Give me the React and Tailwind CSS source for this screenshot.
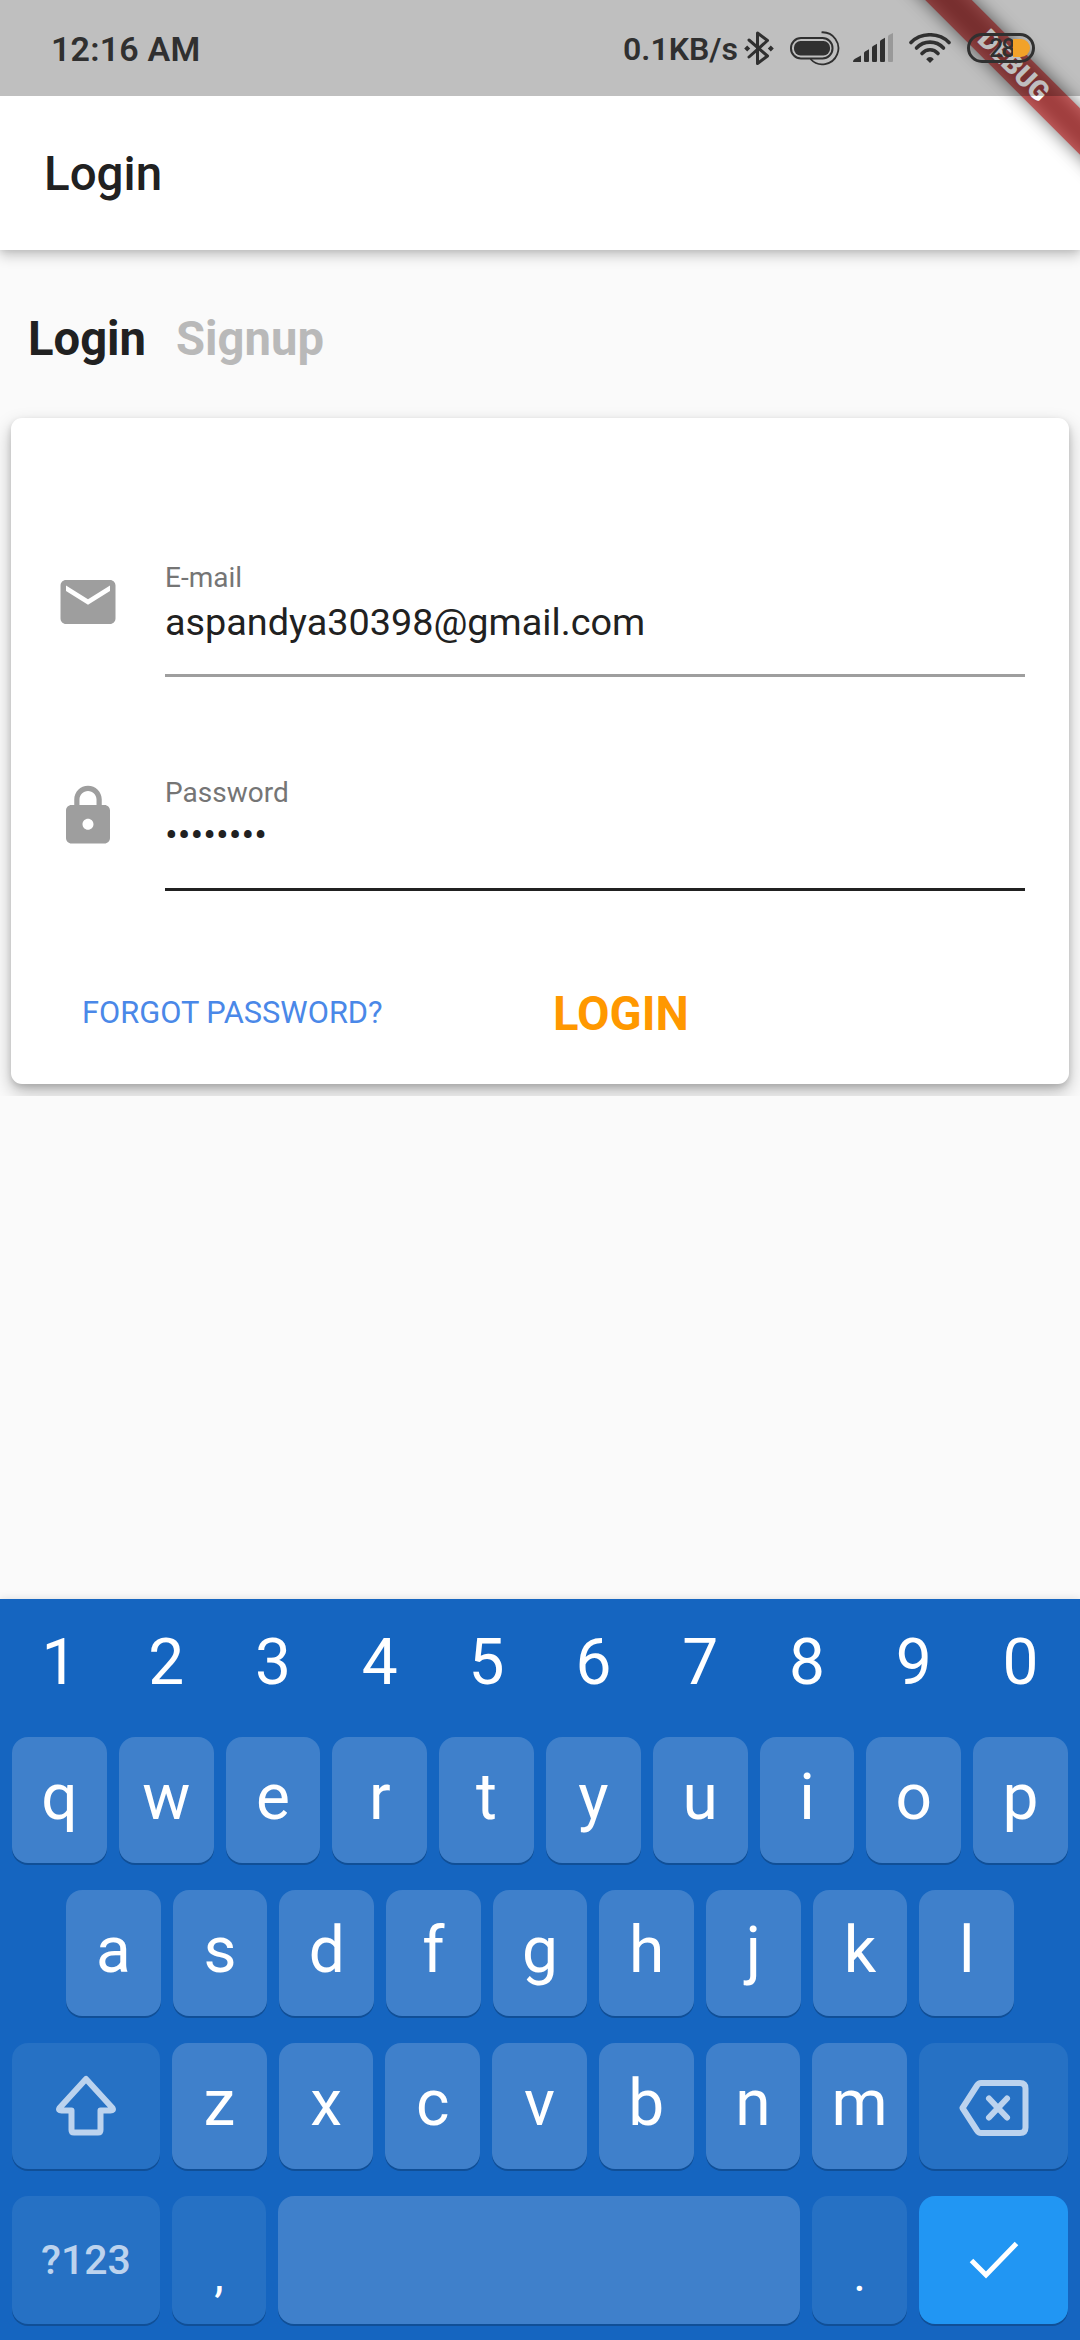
import React from "react";

const DIGITS = ["1", "2", "3", "4", "5", "6", "7", "8", "9", "0"];
const ROW_TOP = ["q", "w", "e", "r", "t", "y", "u", "i", "o", "p"];
const ROW_HOME = ["a", "s", "d", "f", "g", "h", "j", "k", "l"];
const ROW_BOTTOM = ["z", "x", "c", "v", "b", "n", "m"];

function BluetoothIcon() {
  return (
    <svg width="30" height="36" viewBox="0 0 30 36" fill="none" stroke="#303030" strokeWidth="3" strokeLinejoin="round" strokeLinecap="round">
      <path d="M5 10 L23.500 26 L13.500 33.500 V3 L23.500 10.500 L5 27" />
      <path d="M3.200 15.500 L6.200 18.500 L3.200 21.500 L.2 18.500Z M26.800 15.500 L29.800 18.500 L26.800 21.500 L23.800 18.500Z" fill="#303030" stroke="none" />
    </svg>
  );
}

function DeviceBatteryIcon() {
  return (
    <svg width="50" height="36" viewBox="0 0 50 36" fill="none" stroke="#303030">
      <rect x="1" y="8" width="41.500" height="20.500" rx="10" strokeWidth="2" />
      <rect x="4" y="11" width="36" height="14.500" rx="6.500" fill="#303030" stroke="none" />
      <path d="M31.500 2.300 A16 16 0 1 1 20.500 29" strokeWidth="1.800" />
    </svg>
  );
}

function SignalIcon() {
  return (
    <svg width="41" height="30" viewBox="0 0 41 30" fill="#303030">
      <path d="M0 28.500 Q0 27 2 25.800 L8 22.500 V29 H1 Q0 29 0 28.500Z" />
      <path d="M11 20 Q11 19 12 18.500 L16 16.300 V28 Q16 29 15 29 H12 Q11 29 11 28Z" />
      <path d="M19 14.500 Q19 13.500 20 13 L24 10.800 V28 Q24 29 23 29 H20 Q19 29 19 28Z" />
      <path d="M27 8.500 Q27 7.500 28 7 L32 4.800 V28 Q32 29 31 29 H28 Q27 29 27 28Z" />
      <path d="M35 3.500 Q35 2.500 36 2 L40 0 V28 Q40 29 39 29 H36 Q35 29 35 28Z" fill="#999999" />
    </svg>
  );
}

function WifiIcon() {
  return (
    <svg width="42" height="31" viewBox="0 0 42 31" fill="none" stroke="#303030" strokeWidth="3.600" strokeLinecap="round">
      <path d="M2 9.500 C12 -.8 30 -.8 40 9.500" />
      <path d="M7.500 15 C15 7.200 27 7.200 34.500 15" />
      <path d="M13 20.500 C17.500 15.500 24.500 15.500 29 20.500" />
      <path d="M21 30 L17.200 26.300 Q18.800 24 21 24 Q23.200 24 24.800 26.300Z" fill="#303030" stroke="none" />
    </svg>
  );
}

function StatusBar() {
  return (
    <div className="relative z-20 flex h-24 items-center bg-black/25 pl-[51px] text-[#303030]">
      <span className="w-[572px] pt-px text-[34px] leading-none font-semibold tracking-[0.2px]">12:16 AM</span>
      <span className="w-[121px] pt-px text-[32px] leading-none font-semibold whitespace-nowrap">0.1KB/s</span>
      <BluetoothIcon />
      <span className="ml-4"><DeviceBatteryIcon /></span>
      <span className="ml-[13px]"><SignalIcon /></span>
      <span className="ml-[15px]"><WifiIcon /></span>
      <span className="ml-[16px] flex h-[30px] w-[68px] items-center rounded-full border-[3px] border-[#303030] pl-[19px]">
        <span className="w-[24px] text-[25px] leading-none font-medium tracking-[-2px]">28</span>
        <span className="h-[18px] w-[17px] rounded-l-[3px] rounded-r-full bg-[#f2a229]" />
      </span>
    </div>
  );
}

function DebugRibbon() {
  return (
    <div className="pointer-events-none absolute top-0 right-0 z-10 h-[240px] w-[240px] overflow-hidden">
      <div className="absolute top-[49px] left-[14px] h-[33px] w-[320px] rotate-45 bg-black/55 blur-[9px]" />
      <div className="absolute top-[49px] left-[14px] flex h-[33px] w-[320px] rotate-45 items-center justify-center bg-[#b71c1c]/63 text-[27.500px] leading-none font-black text-white">
        DEBUG
      </div>
    </div>
  );
}

function MailIcon() {
  return (
    <svg width="66" height="66" viewBox="0 0 24 24" fill="#9e9e9e">
      <path d="M20 4H4c-1.100 0-1.990.9-1.990 2L2 18c0 1.100.9 2 2 2h16c1.100 0 2-.9 2-2V6c0-1.100-.9-2-2-2zm0 4l-8 5-8-5V6l8 5 8-5v2z" />
    </svg>
  );
}

function LockIcon() {
  return (
    <svg width="66" height="66" viewBox="0 0 24 24" fill="#9e9e9e">
      <path d="M18 8h-1V6c0-2.760-2.240-5-5-5S7 3.240 7 6v2H6c-1.100 0-2 .9-2 2v10c0 1.100.9 2 2 2h12c1.100 0 2-.9 2-2V10c0-1.100-.9-2-2-2zm-6 9c-1.100 0-2-.9-2-2s.9-2 2-2 2 .9 2 2-.9 2-2 2zm3.100-9H8.900V6c0-1.710 1.390-3.100 3.100-3.100 1.710 0 3.100 1.390 3.100 3.100v2z" />
    </svg>
  );
}

function LoginCard() {
  return (
    <div className="h-[690px] overflow-hidden px-[11px] pt-[12px]">
      <div className="h-[666px] rounded-[11px] bg-white pr-[44px] pl-[44px] pt-[141px] shadow-[0_8px_18px_rgba(0,0,0,0.26),0_3px_6px_rgba(0,0,0,0.14)]">
        <div className="flex h-[215px]">
          <div className="w-[110px] pt-[10px]"><MailIcon /></div>
          <div className="h-[118px] flex-1 border-b-[3px] border-[#9e9e9e]">
            <div className="pt-[3px] text-[28px] leading-[32px] text-[#757575]">E-mail</div>
            <div className="pt-[6px] text-[37.800px] leading-[44px] text-[#212121]">aspandya30398@gmail.com</div>
          </div>
        </div>
        <div className="flex h-[188px]">
          <div className="w-[110px] pt-[9px]"><LockIcon /></div>
          <div className="h-[117px] flex-1 border-b-[3px] border-[#212121]">
            <div className="pt-[3px] text-[28px] leading-[32px] text-[#757575]">Password</div>
            <div className="pt-[4px] text-[37.800px] leading-[44px] text-[#212121]">••••••••</div>
          </div>
        </div>
        <div className="mt-[9px] flex h-[84px] items-center pl-[27px]">
          <span className="w-[471px] text-[30.800px] leading-none text-[#4a88e8]">FORGOT PASSWORD?</span>
          <span className="pt-[3px] text-[47.200px] leading-none font-bold text-[#ff9800]">LOGIN</span>
        </div>
      </div>
    </div>
  );
}

function Key({ children }) {
  return (
    <div className="flex h-[126px] min-w-0 flex-1 items-center justify-center rounded-2xl bg-[#3f80cb] pb-[5px] text-[64px] leading-none text-white shadow-[0_2px_0_#104f97]">
      {children}
    </div>
  );
}

function ShiftIcon() {
  return (
    <svg width="66" height="66" viewBox="0 0 66 66" fill="none" stroke="#bcd3ee" strokeWidth="6" strokeLinejoin="round">
      <path d="M33 6 L6.500 35 Q5 37.500 8.500 37.500 H18.500 V57 Q18.500 59.500 21 59.500 H45 Q47.500 59.500 47.500 57 V37.500 H57.500 Q61 37.500 59.500 35 Z" />
    </svg>
  );
}

function BackspaceIcon() {
  return (
    <svg width="70" height="56" viewBox="0 0 70 56" fill="none" stroke="#bcd3ee" strokeWidth="6" strokeLinejoin="round" strokeLinecap="round">
      <path d="M22 3 H61 Q66.500 3 66.500 8.500 V47.500 Q66.500 53 61 53 H22 Q19.500 53 18 50.500 L3.500 28 L18 5.500 Q19.500 3 22 3Z" />
      <path d="M30 18.500 L48 37.500 M48 18.500 L30 37.500" />
    </svg>
  );
}

function Keyboard() {
  return (
    <div className="flex h-[741px] flex-col bg-[#1565c0] px-3 text-white shadow-[0_0_8px_rgba(0,0,0,0.12)]">
      <div className="flex h-[138px] gap-3 pt-[32px]">
        {DIGITS.map((d) => (
          <div key={d} className="flex-1 text-center text-[64px] leading-[64px]">{d}</div>
        ))}
      </div>
      <div className="flex gap-3">
        {ROW_TOP.map((k) => <Key key={k}>{k}</Key>)}
      </div>
      <div className="mt-[27px] flex gap-3 px-[54px]">
        {ROW_HOME.map((k) => <Key key={k}>{k}</Key>)}
      </div>
      <div className="mt-[27px] flex gap-3">
        <div className="flex h-[126px] w-[148px] items-center justify-center rounded-2xl bg-[#2671c4] shadow-[0_2px_0_#104f97]"><ShiftIcon /></div>
        {ROW_BOTTOM.map((k) => <Key key={k}>{k}</Key>)}
        <div className="flex h-[126px] w-[149px] items-center justify-center rounded-2xl bg-[#2671c4] pt-1 shadow-[0_2px_0_#104f97]"><BackspaceIcon /></div>
      </div>
      <div className="mt-[27px] flex h-[128px] gap-3">
        <div className="flex w-[148px] items-center justify-center rounded-2xl bg-[#2671c4] pt-px text-[41px] leading-none font-medium text-[#bcd3ee] shadow-[0_2px_0_#104f97]">?123</div>
        <div className="w-[94px] rounded-2xl bg-[#2671c4] pt-[47px] text-center text-[48px] leading-[64px] shadow-[0_2px_0_#104f97]">,</div>
        <div className="flex-1 rounded-2xl bg-[#3f80cb] shadow-[0_2px_0_#104f97]" />
        <div className="w-[95px] rounded-2xl bg-[#2671c4] pt-[47px] text-center text-[48px] leading-[64px] shadow-[0_2px_0_#104f97]">.</div>
        <div className="flex w-[149px] items-center justify-center rounded-2xl bg-[#2196f3] shadow-[0_2px_0_#104f97]">
          <svg width="50" height="40" viewBox="0 0 50 40" fill="none" stroke="#ffffff" strokeWidth="5">
            <path d="M2.500 20.500 L17 35 L47.500 3.500" />
          </svg>
        </div>
      </div>
    </div>
  );
}

export default function App() {
  return (
    <div className="relative flex h-[2340px] w-[1080px] flex-col overflow-hidden bg-[#fafafa] font-['Roboto',sans-serif]">
      <header className="bg-white shadow-[0_6px_12px_rgba(0,0,0,0.2),0_1px_6px_rgba(0,0,0,0.1)]">
        <StatusBar />
        <div className="flex h-[154px] items-center pt-[3px] pl-[44px]">
          <h1 className="text-[47.500px] leading-none font-medium text-[#212121]">Login</h1>
        </div>
      </header>
      <div className="flex h-[156px] items-center gap-[30px] pl-[28px] pt-[23px] text-[47.200px] leading-none font-bold">
        <span className="text-[#212121]">Login</span>
        <span className="text-[#b9b9b9]">Signup</span>
      </div>
      <LoginCard />
      <div className="flex-1" />
      <Keyboard />
      <DebugRibbon />
    </div>
  );
}
